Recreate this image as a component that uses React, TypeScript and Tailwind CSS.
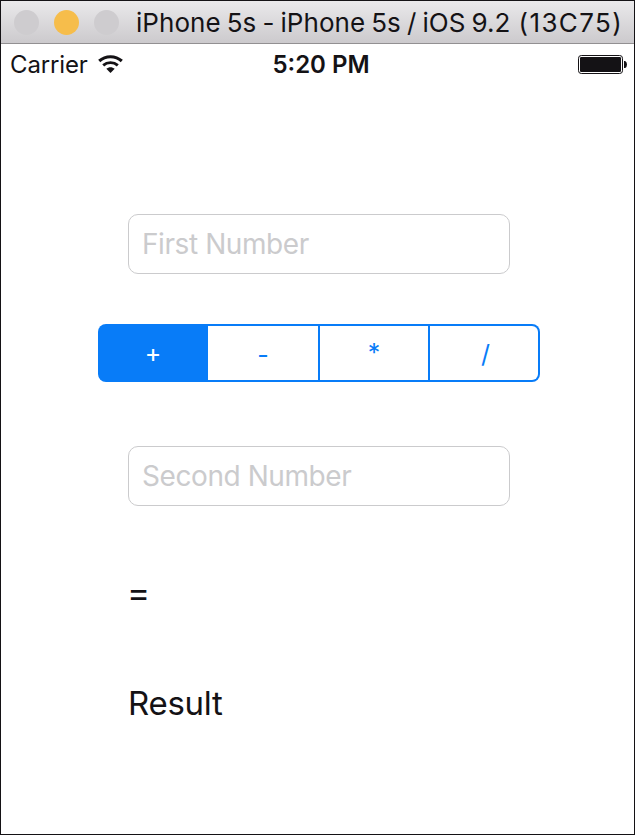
const operators = [
  { symbol: "-", shape: "w-[110px] pt-[3px]" },
  { symbol: "*", shape: "w-[108px]" },
  { symbol: "/", shape: "w-[108px] rounded-r-[6px] pl-[3px] pt-[2px]" },
];

function WifiIcon() {
  return (
    <svg className="ml-[10px] mt-[11px] h-[18px] w-[25px] shrink-0" viewBox="0 0 25 18" fill="none">
      <path d="M1.2 6C7.6.3 17.4.3 23.8 6" stroke="#141215" strokeWidth="3.1" />
      <path d="M5.2 10.3C9.3 6.7 15.7 6.7 19.8 10.3" stroke="#141215" strokeWidth="2.9" />
      <path d="M8.3 13.8C10.7 11.6 14.3 11.6 16.7 13.8L12.5 18Z" fill="#141215" />
    </svg>
  );
}

function BatteryIcon() {
  return (
    <svg className="h-[19px] w-[49px]" viewBox="0 0 49 19" fill="none">
      <rect x=".5" y=".5" width="44" height="18" rx="2.8" stroke="#141215" />
      <rect x="2" y="2" width="41" height="15" rx="1.3" fill="#141215" />
      <path d="M46 6h1.2q1.8 1 1.8 3.5t-1.8 3.5H46z" fill="#141215" />
    </svg>
  );
}

function Field({ label }: { label: string }) {
  return (
    <input
      aria-label={label}
      placeholder={label}
      className="ml-[127px] block h-[60px] w-[382px] rounded-[10px] border border-[#cbcbcd] bg-white px-[13px] text-[28px] tracking-[-0.42px] placeholder:text-[#cbcbcd]"
    />
  );
}

export default function App() {
  return (
    <div className="h-[835px] w-[635px] overflow-hidden border border-[#141215] bg-white font-['Inter',sans-serif] text-[#141215]">
      <header className="flex h-[43px] items-center border-b border-[#929092] bg-linear-to-b from-[#eae9eb] to-[#cccacd] pl-[12.5px]">
        <div className="flex gap-[15px]">
          <span className="size-[25px] rounded-full bg-[#cecccf]" />
          <span className="size-[25px] rounded-full bg-[#f6bd4b]" />
          <span className="size-[25px] rounded-full bg-[#cecccf]" />
        </div>
        <h1 className="ml-[17.5px] whitespace-nowrap pt-[2px] text-[26px] leading-[42px] tracking-[0.05px] [word-spacing:-1.3px]">
          iPhone 5s - iPhone 5s / iOS 9.2 <span className="ml-[2px] tracking-[1.4px]">(13C75)</span>
        </h1>
      </header>
      <div className="grid h-[42px] grid-cols-[1fr_auto_1fr] leading-[42px]">
        <div className="flex pl-[9px] text-[24px] tracking-[-0.15px]">
          <span>Carrier</span>
          <WifiIcon />
        </div>
        <span className="ml-[7px] text-[24px] font-semibold">5:20 PM</span>
        <div className="flex justify-end pr-[7px] pt-[11px]">
          <BatteryIcon />
        </div>
      </div>
      <main className="pt-[128px]">
        <Field label="First Number" />
        <div className="ml-[97px] mt-[50px] flex h-[58px] w-[442px] gap-[2px] rounded-[8px] bg-[#087cf8] p-[2px] text-[25px] leading-[50px]">
          <button className="w-[106px] text-white">+</button>
          {operators.map(({ symbol, shape }) => (
            <button key={symbol} className={`bg-white text-[#087cf8] ${shape}`}>
              {symbol}
            </button>
          ))}
        </div>
        <div className="h-[64px]" />
        <Field label="Second Number" />
        <p className="ml-[126px] mt-[65px] h-[42px] text-[35px] leading-[42px]">=</p>
        <p className="ml-[127px] mt-[69px] h-[42px] text-[33px] leading-[42px] tracking-[-0.3px]">Result</p>
      </main>
    </div>
  );
}
